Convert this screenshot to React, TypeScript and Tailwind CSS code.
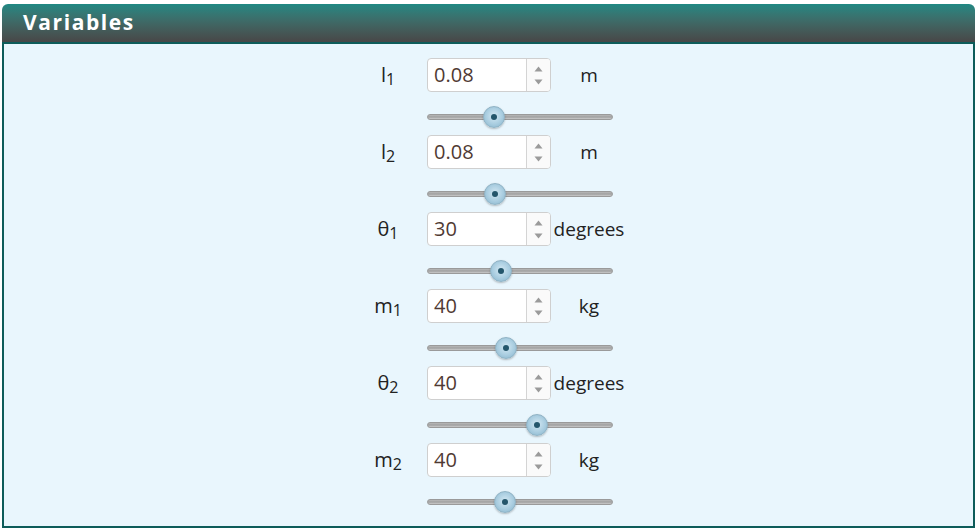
import React from "react";

type Row = { sym: string; sub: string; value: string; unit: string; thumb: number };

const rows: Row[] = [
  { sym: "l", sub: "1", value: "0.08", unit: "m", thumb: 494 },
  { sym: "l", sub: "2", value: "0.08", unit: "m", thumb: 495 },
  { sym: "θ", sub: "1", value: "30", unit: "degrees", thumb: 501 },
  { sym: "m", sub: "1", value: "40", unit: "kg", thumb: 506 },
  { sym: "θ", sub: "2", value: "40", unit: "degrees", thumb: 537 },
  { sym: "m", sub: "2", value: "40", unit: "kg", thumb: 505 },
];

function Spinner() {
  return (
    <div className="flex w-[24px] flex-col items-center justify-center gap-[7px] border-l border-[#d4d4d4] bg-[#fafafa]">
      <svg width="9" height="6" viewBox="0 0 9 6">
        <path d="M4.5 0.5 L8.5 5.5 L0.5 5.5 Z" fill="#9a9a9a" />
      </svg>
      <svg width="9" height="6" viewBox="0 0 9 6">
        <path d="M0.5 0.5 L8.5 0.5 L4.5 5.5 Z" fill="#9a9a9a" />
      </svg>
    </div>
  );
}

function Slider({ center }: { center: number }) {
  const left = center - 427 - 11;
  return (
    <div className="relative h-[22px] w-[186px]">
      <div className="absolute left-0 right-0 top-[8px] h-[6px] rounded-full border border-[#9a9a9a] bg-gradient-to-b from-[#b8b8b8] via-[#a0a0a0] to-[#cbcbcb]" />
      <div
        className="absolute top-0 flex h-[22px] w-[22px] items-center justify-center rounded-full border border-[#8fb2c4] shadow-[0_1px_2px_rgba(0,0,0,0.25)]"
        style={{
          left,
          background: "radial-gradient(circle at 50% 45%, #d3e8f3 0%, #a9cde0 55%, #84b2ca 100%)",
        }}
      >
        <div className="h-[6px] w-[6px] rounded-full bg-[#24566b]" />
      </div>
    </div>
  );
}

export default function App() {
  return (
    <div
      className="w-[977px] h-[530px] bg-white pt-[4px] px-[2px]"
      style={{ fontFamily: "'Open Sans', 'Noto Sans', sans-serif" }}
    >
      <div className="h-[40px] rounded-t-[6px] border-b-2 border-[#0e5c5a] bg-gradient-to-b from-[#1f8883] to-[#474747] pl-[21px] flex items-center">
        <span className="text-[21px] font-bold tracking-[1.6px] text-white" style={{ fontFamily: "'Open Sans', sans-serif" }}>
          Variables
        </span>
      </div>
      <div className="h-[484px] border-x-2 border-b-2 border-[#0e5c5a] bg-[#e9f6fd] pt-[14px] pl-[353px]">
        <div className="flex flex-col gap-[7px]">
          {rows.map((r, i) => (
            <div key={i} className="flex flex-col gap-[14px]">
              <div className="flex items-center">
                <div className="w-[62px] text-center text-[20px] text-[#222]">
                  {r.sym}
                  <sub className="text-[16px] relative top-[3px]">{r.sub}</sub>
                </div>
                <div className="ml-[8px] flex h-[34px] w-[124px] overflow-hidden rounded-[4px] border border-[#cfcfcf] bg-white">
                  <div className="flex flex-1 items-center pl-[6px] text-[20px] text-[#4f3a33]">{r.value}</div>
                  <Spinner />
                </div>
                <div className="w-[76px] text-center text-[19px] text-[#222]">{r.unit}</div>
              </div>
              <div className="ml-[70px]">
                <Slider center={r.thumb} />
              </div>
            </div>
          ))}
        </div>
      </div>
    </div>
  );
}
